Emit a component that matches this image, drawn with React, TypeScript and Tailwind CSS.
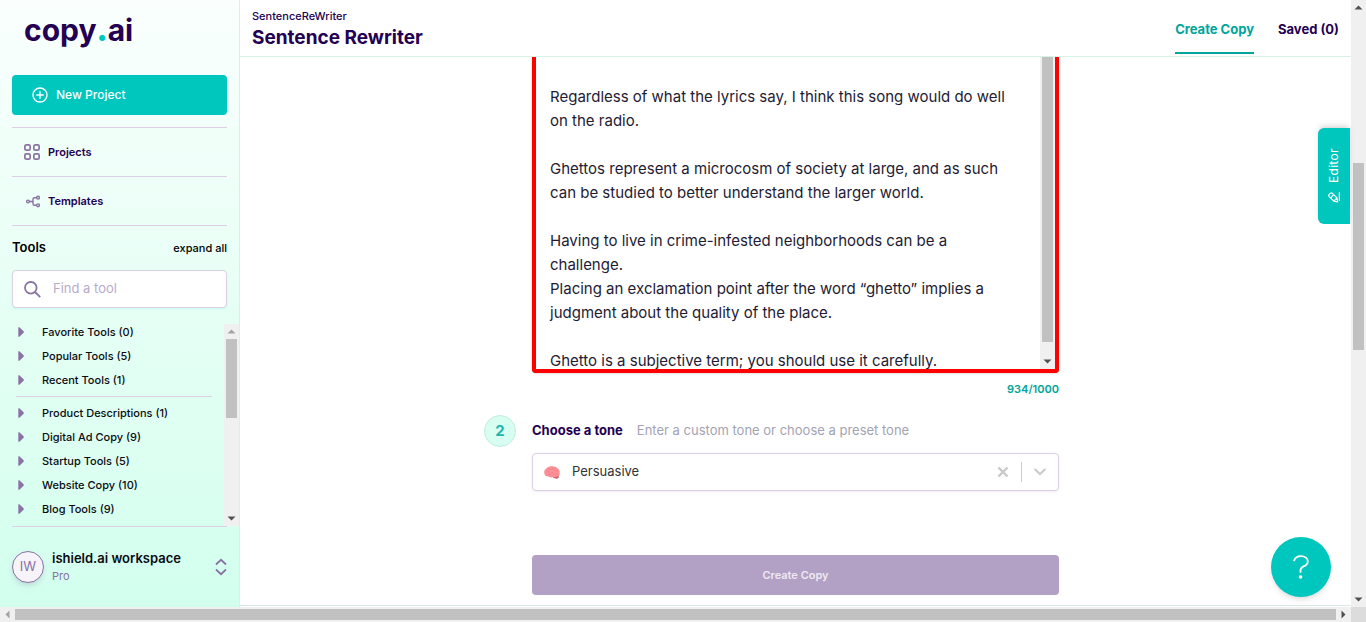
import { useState } from "react";

const favoriteGroups = ["Favorite Tools (0)", "Popular Tools (5)", "Recent Tools (1)"];
const toolGroups = [
  "Product Descriptions (1)",
  "Digital Ad Copy (9)",
  "Startup Tools (5)",
  "Website Copy (10)",
  "Blog Tools (9)",
];

const sentences = `Regardless of what the lyrics say, I think this song would do well on the radio.

Ghettos represent a microcosm of society at large, and as such can be studied to better understand the larger world.

Having to live in crime-infested neighborhoods can be a challenge.
Placing an exclamation point after the word “ghetto” implies a judgment about the quality of the place.

Ghetto is a subjective term; you should use it carefully.`;

function Arrow({ className }: { className: string }) {
  return (
    <svg viewBox="0 0 15 15" className={`size-[15px] shrink-0 ${className}`} fill="currentColor" aria-hidden="true">
      <path d="M3.5 9.5 7.5 5.5 11.5 9.5Z" />
    </svg>
  );
}

function ToolGroup({ label }: { label: string }) {
  return (
    <li>
      <button type="button" className="flex h-6 w-full items-center text-left text-[11px] font-[450] text-[#0b0b12]">
        <svg viewBox="0 0 6 10" className="mr-[18px] ml-[18px] h-2.5 w-1.5 text-[#8a72a3]" fill="currentColor" aria-hidden="true">
          <path d="M0.3 0.8Q0.3 0 1.4 0.3L5.4 4Q6.2 5 5.4 6L1.4 9.7Q0.3 10 0.3 9.2Z" />
        </svg>
        {label}
      </button>
    </li>
  );
}

function Sidebar() {
  return (
    <aside className="flex w-60 shrink-0 flex-col border-r border-[#d9f0e8] bg-linear-to-b from-[#fafffd] to-[#d2ffee]">
      <div className="px-3">
        <a href="#home" className="flex h-[75px] pt-2.5 pl-3 text-[30px] leading-10 font-bold text-[#240052]">
          <span>copy</span>
          <span className="font-black text-[#00c7be]">.</span>
          <span>ai</span>
        </a>
        <button type="button" className="flex h-10 w-full items-center gap-2 rounded-sm bg-[#00c7be] pl-5 text-xs font-medium text-white">
          <svg viewBox="0 0 16 16" className="size-4" fill="none" stroke="currentColor" strokeWidth="1.4" strokeLinecap="round" aria-hidden="true">
            <circle cx="8" cy="8" r="7" />
            <path d="M8 4.8V11.2M4.8 8H11.2" />
          </svg>
          New Project
        </button>
        <nav className="mt-3 text-[11px] font-semibold text-[#240052]">
          <a href="#projects" className="flex h-[49px] items-center gap-2 border-t border-[#dccfe6] pl-3">
            <svg viewBox="0 0 16 16" className="size-4 text-[#8a72a3]" fill="none" stroke="currentColor" strokeWidth="1.7" aria-hidden="true">
              <rect x="0.85" y="0.85" width="5.3" height="5.3" rx="1.5" />
              <rect x="9.85" y="0.85" width="5.3" height="5.3" rx="1.5" />
              <rect x="0.85" y="9.85" width="5.3" height="5.3" rx="1.5" />
              <rect x="9.85" y="9.85" width="5.3" height="5.3" rx="1.5" />
            </svg>
            Projects
          </a>
          <a href="#templates" className="flex h-[50px] items-center gap-2 border-y border-[#dccfe6] pl-3">
            <svg viewBox="0 0 16 16" className="size-4 text-[#8a72a3]" fill="none" stroke="currentColor" strokeWidth="1.4" aria-hidden="true">
              <circle cx="4" cy="8.5" r="1.4" />
              <circle cx="14" cy="4.7" r="1.4" />
              <circle cx="14" cy="12.3" r="1.4" />
              <path d="M5.4 8.5H9M12.6 4.7H10.5Q9 4.7 9 6.2V10.8Q9 12.3 10.5 12.3H12.6" />
            </svg>
            Templates
          </a>
        </nav>
        <div className="flex h-11 items-center justify-between text-black">
          <h2 className="text-[13px] font-semibold">Tools</h2>
          <button type="button" className="text-[11px] font-[450]">expand all</button>
        </div>
        <div className="flex h-[38px] items-center rounded-sm border border-[#dccfe6] bg-white pl-[11px] shadow-sm shadow-[#00c7be]/10">
          <svg viewBox="0 0 17 17" className="size-[17px] shrink-0 text-[#8a72a3]" fill="none" stroke="currentColor" strokeWidth="1.8" aria-hidden="true">
            <circle cx="6.8" cy="6.8" r="5.8" />
            <path d="M11 11 16.2 16.2" />
          </svg>
          <input type="search" aria-label="Find a tool" placeholder="Find a tool" className="ml-3 w-full min-w-0 bg-transparent text-[13px] text-[#240052] outline-none placeholder:text-[#b9abc9]" />
        </div>
      </div>

      <div className="mt-3 flex min-h-0 flex-1">
        <div className="min-w-0 flex-1 overflow-hidden">
          <ul>
            {favoriteGroups.map((g) => (
              <ToolGroup key={g} label={g} />
            ))}
          </ul>
          <hr className="my-1 mr-3 ml-4 border-[#dccfe6]" />
          <ul>
            {toolGroups.map((g) => (
              <ToolGroup key={g} label={g} />
            ))}
          </ul>
        </div>
        <div className="mt-1 flex w-[15px] flex-col items-center bg-[#f0f0f0]">
          <Arrow className="text-[#a3a3a3]" />
          <div className="h-[79px] w-[11px] bg-[#c1c1c1]" />
          <Arrow className="mt-auto rotate-180 text-[#505050]" />
        </div>
      </div>

      <div className="px-3">
        <button type="button" className="flex h-[81px] w-full items-center border-t border-[#dccfe6] text-left">
          <span className="grid size-8 place-items-center rounded-full border border-[#8a72a3] bg-[#f6f4f8] text-[13px] text-[#8a72a3] shadow-md shadow-[#240052]/10">IW</span>
          <span className="ml-2 flex-1">
            <span className="block text-[13px] leading-[18px] font-semibold text-[#0b0b12]">ishield.ai workspace</span>
            <span className="block text-[11px] leading-[18px] text-[#8a72a3]">Pro</span>
          </span>
          <svg viewBox="0 0 12 18" className="h-[18px] w-3 text-[#8a72a3]" fill="none" stroke="currentColor" strokeWidth="1.8" aria-hidden="true">
            <path d="M1 6.5 6 1.8 11 6.5M1 11.5 6 16.2 11 11.5" />
          </svg>
        </button>
      </div>
    </aside>
  );
}

function ToneSelect() {
  return (
    <div className="mt-1.5 flex h-[38px] items-center rounded-sm border border-[#dccfe6] bg-white shadow-sm shadow-[#240052]/5">
      <svg viewBox="0 0 16 13" className="ml-[11px] h-[13px] w-4 shrink-0" aria-hidden="true">
        <path d="M7.5 10Q10 13.2 13 12.8 15.2 12.2 15 9Z" fill="#d0606e" />
        <path d="M0.3 7.6C-0.2 5 1 3.2 2.6 2.3 4 0.8 6 0.2 8 0.3 10.4 0 12.4 0.9 13.4 2.2 15.2 3 15.9 4.8 15.7 6.8 15.9 9 14.8 10.4 13 10.6 11.6 11.4 10 11.3 9 11 7.4 11.8 5.4 11.4 4.4 10.6 2.2 10.8 0.6 9.6 0.3 7.6Z" fill="#fd8f97" />
        <path d="M2 6.5Q3.5 4.5 5 6M4.5 2.8Q5.5 4 7 3M8.3 1.6Q8.6 3.8 10.5 3.2M6 7.5Q8 5.5 9.5 7.3M11 5.3Q12.5 4 13.8 5.6M4 9Q5.5 8 6.8 9M10.8 8.8Q12.3 7.5 13.6 8.4" fill="none" stroke="#e87883" strokeWidth="0.6" />
      </svg>
      <select id="tone" defaultValue="Persuasive" className="ml-3 h-full min-w-0 flex-1 appearance-none bg-transparent text-[13px] text-[#333333] outline-none">
        <option>Persuasive</option>
        <option>Friendly</option>
        <option>Professional</option>
      </select>
      <button type="button" aria-label="Clear tone" className="mr-3 text-[#c9c9c9]">
        <svg viewBox="0 0 12 12" className="size-3" fill="none" stroke="currentColor" strokeWidth="2.4" aria-hidden="true">
          <path d="M1.5 1.5 10.5 10.5M10.5 1.5 1.5 10.5" />
        </svg>
      </button>
      <span className="h-5 w-px bg-[#cccccc]" />
      <svg viewBox="0 0 12 8" className="mx-3 h-2 w-3 text-[#c9c9c9]" fill="none" stroke="currentColor" strokeWidth="2" strokeLinecap="round" aria-hidden="true">
        <path d="M1.2 1.5 6 6.2 10.8 1.5" />
      </svg>
    </div>
  );
}

export default function App() {
  const [text, setText] = useState(sentences);
  return (
    <div className="flex h-screen flex-col overflow-hidden bg-white font-[Inter,'Liberation_Sans',sans-serif]">
      <div className="flex min-h-0 flex-1">
        <Sidebar />
        <div className="relative flex min-w-0 flex-1 flex-col">
          <header className="flex h-[57px] shrink-0 justify-between border-b border-[#d9f0e2] px-3 text-[#240052]">
            <div className="pt-2">
              <p className="text-[11px] leading-4 font-[450]">SentenceReWriter</p>
              <h1 className="text-[19px] leading-7 font-bold">Sentence Rewriter</h1>
            </div>
            <nav className="flex h-[54px] gap-6 text-[13px] leading-[58px] font-bold">
              <a href="#create" className="border-b-2 border-[#00a59b] text-[#00a59b]">Create Copy</a>
              <a href="#saved">Saved (0)</a>
            </nav>
          </header>

          <main className="min-h-0 flex-1 overflow-hidden">
            <form className="mx-auto grid max-w-[623px] grid-cols-[48px_1fr_48px]" onSubmit={(e) => e.preventDefault()}>
              <div className="col-start-2 flex rounded-b-sm border-4 border-t-0 border-[#ff0000] shadow-sm">
                <textarea
                  aria-label="Sentences to rewrite"
                  value={text}
                  onChange={(e) => setText(e.target.value)}
                  className="h-[312px] min-w-0 flex-1 resize-none overflow-hidden bg-white pt-7 pr-7 pl-3.5 text-[15px] leading-6 text-[#231b33] outline-none"
                />
                <div className="flex w-[15px] flex-col items-center bg-[#f0f0f0]">
                  <div className="w-[11px] flex-1 bg-[#c1c1c1]" />
                  <Arrow className="mt-3 rotate-180 text-[#505050]" />
                </div>
              </div>
              <p className="col-start-2 mt-2 text-right text-[11px] leading-4 font-semibold text-[#00a59b]">934/1000</p>

              <span className="col-start-1 mt-[18px] grid size-8 place-items-center rounded-full border border-[#bfeee4] bg-[#d8fdf1] text-[15px] font-bold text-[#1fb5ae]">2</span>
              <div className="mt-[18px] flex h-8 items-center gap-3.5 text-[13px]">
                <label htmlFor="tone" className="font-bold text-[#240052]">Choose a tone</label>
                <span className="text-[#a3a3b3]">Enter a custom tone or choose a preset tone</span>
              </div>
              <div className="col-start-2">
                <ToneSelect />
                <button type="submit" className="mt-16 h-10 w-full rounded-sm bg-[#b3a1c5] text-[11px] font-semibold text-[#eee8f3]">Create Copy</button>
              </div>
            </form>
            <hr className="mt-2.5 border-[#d9e8e2]" />
          </main>

          <button type="button" className="absolute top-32 right-px flex h-24 w-8 rotate-180 items-center justify-center gap-2 rounded-r-md bg-[#00c7be] text-[12px] tracking-wide text-white shadow-md [writing-mode:vertical-rl]">
            <svg viewBox="0 0 12 12" className="size-3 rotate-90" fill="none" stroke="currentColor" strokeWidth="1.2" strokeLinejoin="round" aria-hidden="true">
              <path d="M2 11.4H11M1 9.6 1.8 5.8 6.4 1.2Q7.4 0.2 8.6 1.2L9.6 2.2Q10.6 3.4 9.6 4.4L5 9ZM5.2 2.6 8.3 5.7M1.8 5.8 5 9" />
            </svg>
            Editor
          </button>
          <button type="button" aria-label="Help" className="absolute right-5 bottom-2.5 grid size-[60px] place-items-center rounded-full bg-[#00c7be] text-white shadow-md">
            <svg viewBox="0 0 16 24" className="h-6 w-4" fill="none" stroke="currentColor" strokeWidth="1.8" strokeLinecap="round" aria-hidden="true">
              <path d="M1.2 5.4C2.2 2.6 4.8 1.2 8 1.2 12 1.2 14.8 3.2 14.8 6.4 14.8 9.4 12.8 10.4 10.6 11.4 8.4 12.4 7.5 13.4 7.5 15.4V17" />
              <circle cx="7.5" cy="22" r="1.8" fill="currentColor" stroke="none" />
            </svg>
          </button>
        </div>
        <div className="flex w-[15px] shrink-0 flex-col items-center bg-[#f0f0f0]">
          <Arrow className="text-[#505050]" />
          <div className="mt-[148px] h-[187px] w-[11px] bg-[#c1c1c1]" />
          <Arrow className="mt-auto rotate-180 text-[#505050]" />
        </div>
      </div>
      <div className="flex h-[15px] shrink-0 items-center bg-[#f0f0f0]">
        <Arrow className="-rotate-90 text-[#a3a3a3]" />
        <div className="h-[11px] flex-1 bg-[#c1c1c1]" />
        <Arrow className="rotate-90 text-[#505050]" />
        <div className="size-[15px] bg-[#dcdcdc]" />
      </div>
    </div>
  );
}
